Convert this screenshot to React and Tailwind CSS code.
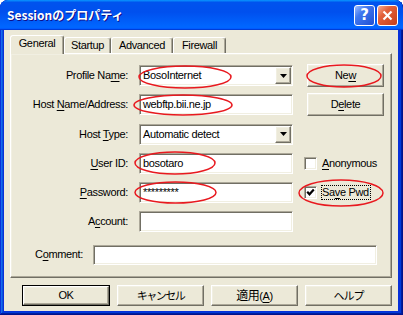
import React from "react";

const RAISED =
  "bg-[#ece9d8] border border-t-white border-l-white border-r-[#716f64] border-b-[#716f64] shadow-[inset_-1px_-1px_0_#aca899,inset_1px_1px_0_#f1efe2]";
const SUNKEN =
  "bg-white border border-t-[#aca899] border-l-[#aca899] border-r-white border-b-white shadow-[inset_1px_1px_0_#716f64,inset_-1px_-1px_0_#f1efe2]";
const JP = "font-['Noto_Sans_CJK_JP',sans-serif]";

function Mn({ children }) {
  return <span className="underline underline-offset-[1.5px]">{children}</span>;
}

function Label({ children }) {
  return (
    <div className="flex items-center justify-end pr-[1px] whitespace-nowrap">
      <span>{children}</span>
    </div>
  );
}

function Combo({ value }) {
  return (
    <div className={`${SUNKEN} flex items-center justify-between`}>
      <span className="pl-[3px] whitespace-nowrap">{value}</span>
      <div className={`${RAISED} m-[1px] w-[16px] h-[17px] flex items-center justify-center`}>
        <svg width="7" height="4" viewBox="0 0 7 4">
          <polygon points="0,0 7,0 3.5,4" fill="#000" />
        </svg>
      </div>
    </div>
  );
}

function Field({ value, className = "" }) {
  return (
    <div className={`${SUNKEN} flex items-center ${className}`}>
      <span className="pl-[3px] whitespace-nowrap">{value}</span>
    </div>
  );
}

function Check({ checked }) {
  return (
    <div className={`${SUNKEN} w-[13px] h-[13px] flex items-center justify-center shrink-0`}>
      {checked && (
        <svg width="9" height="9" viewBox="0 0 9 9">
          <polyline points="1.2,3.8 3.5,6.3 7.8,1.6" fill="none" stroke="#000" strokeWidth="2.2" />
        </svg>
      )}
    </div>
  );
}

function Tab({ active, w, children }) {
  return (
    <div
      className={`${w} ${
        active ? "h-[19px] pb-[3px]" : "h-[16px] mb-[1px]"
      } flex items-center justify-center bg-[#ece9d8] border-t border-l border-r border-t-white border-l-white border-r-[#716f64] shadow-[inset_-1px_0_0_#aca899] rounded-t-[3px]`}
    >
      <span>{children}</span>
    </div>
  );
}

function Btn({ className = "", children }) {
  return (
    <div className={`${RAISED} flex items-center justify-center ${className}`}>
      <span className="whitespace-nowrap">{children}</span>
    </div>
  );
}

export default function App() {
  return (
    <div className="relative w-[403px] h-[315px] bg-white font-['Liberation_Sans',Arial,sans-serif] text-[11px] tracking-[-0.35px] text-black leading-none">
      <div className="w-full h-full rounded-t-[8px] bg-[#0831d9] shadow-[inset_-1px_-1px_#00138c,inset_1px_1px_#0831d9,inset_-2px_-2px_#001ea0,inset_2px_2px_#166aee,inset_-3px_-3px_#003bda,inset_3px_3px_#0855dd] flex flex-col overflow-hidden">
        {/* Title bar */}
        <div className="h-[30px] shrink-0 rounded-t-[8px] bg-[linear-gradient(180deg,#0997ff,#0053ee_8%,#0050ee_40%,#06f_88%,#06f_93%,#005bff_95%,#003dd7_96%,#003dd7)] flex items-center justify-between pl-[7px] pr-[5px]">
          <span className={`${JP} font-bold text-[12px] tracking-[0px] text-white [text-shadow:1px_1px_0_#0f1089]`}>
            Sessionのプロパティ
          </span>
          <div className="flex gap-[2px] mt-[1px]">
            <div className="w-[21px] h-[21px] rounded-[3px] border border-white bg-[linear-gradient(135deg,#9dbcff_0%,#3f77f0_35%,#1f50d2_100%)] flex items-center justify-center">
              <span className="text-white font-bold text-[15px] font-['DejaVu_Sans',sans-serif] tracking-[0px]">?</span>
            </div>
            <div className="w-[21px] h-[21px] rounded-[3px] border border-white bg-[linear-gradient(135deg,#f6ad92_0%,#e3603a_35%,#c63f19_100%)] flex items-center justify-center">
              <svg width="11" height="11" viewBox="0 0 11 11">
                <line x1="1.5" y1="1.5" x2="9.5" y2="9.5" stroke="#fff" strokeWidth="2.2" />
                <line x1="9.5" y1="1.5" x2="1.5" y2="9.5" stroke="#fff" strokeWidth="2.2" />
              </svg>
            </div>
          </div>
        </div>

        {/* Client */}
        <div className="flex-1 pl-[4px] pr-[5px] pb-[4px] flex">
          <div className="flex-1 bg-[#ece9d8] flex flex-col px-[6px] pt-[5px]">
            {/* Tabs */}
            <div className="relative z-10 flex items-end h-[19px]">
              <Tab active w="w-[54px]">General</Tab>
              <Tab w="w-[47px]">Startup</Tab>
              <Tab w="w-[62px]">Advanced</Tab>
              <Tab w="w-[53px]">Firewall</Tab>
            </div>

            {/* Panel */}
            <div className="-mt-[1px] h-[225px] border border-t-white border-l-white border-r-[#716f64] border-b-[#716f64] shadow-[inset_-1px_-1px_0_#aca899,inset_1px_1px_0_#f1efe2] pt-[11px]">
              <div className="grid grid-cols-[118px_154px_81px] auto-rows-[21px] gap-x-[10px] gap-y-[8.3px]">
                <Label>
                  Profile Na<Mn>m</Mn>e:
                </Label>
                <Combo value="BosoInternet" />
                <Btn className="ml-[4px] w-[77px] h-[23px] -mt-[1px]">
                  Ne<Mn>w</Mn>
                </Btn>

                <Label>
                  Host <Mn>N</Mn>ame/Address:
                </Label>
                <Field value="webftp.bii.ne.jp" />
                <Btn className="ml-[4px] w-[77px] h-[23px] -mt-[1px]">
                  D<Mn>e</Mn>lete
                </Btn>

                <Label>
                  Host <Mn>T</Mn>ype:
                </Label>
                <Combo value="Automatic detect" />
                <div />

                <Label>
                  <Mn>U</Mn>ser ID:
                </Label>
                <Field value="bosotaro" />
                <div className="flex items-center pl-[1px]">
                  <Check />
                  <span className="ml-[5px]">
                    <Mn>A</Mn>nonymous
                  </span>
                </div>

                <Label>
                  <Mn>P</Mn>assword:
                </Label>
                <Field value="*********" />
                <div className="flex items-center pl-[1px]">
                  <Check checked />
                  <div className="ml-[4px] h-[15px] pr-[1px] border border-dotted border-black flex items-center">
                    <span className="whitespace-nowrap">
                      Sa<Mn>v</Mn>e Pwd
                    </span>
                  </div>
                </div>

                <Label>
                  A<Mn>c</Mn>count:
                </Label>
                <Field value="" />
                <div />
              </div>

              {/* Comment */}
              <div className="flex items-center mt-[12.5px]">
                <div className="w-[72px] text-right">
                  C<Mn>o</Mn>mment:
                </div>
                <Field value="" className="ml-[10px] w-[284px] h-[20px]" />
              </div>
            </div>

            {/* Bottom buttons */}
            <div className="flex justify-end gap-[7px] mt-[7px]">
              <div className="w-[88px] h-[21px] border border-black flex">
                <Btn className="flex-1">OK</Btn>
              </div>
              <Btn className="w-[87px] h-[21px]">
                <span className={`${JP} text-[11px] tracking-[-1.5px]`}>キャンセル</span>
              </Btn>
              <Btn className="w-[87px] h-[21px]">
                <span className={`${JP} text-[12px] tracking-[-0.5px]`}>適用</span>
                (<Mn>A</Mn>)
              </Btn>
              <Btn className="w-[87px] h-[21px]">
                <span className={`${JP} text-[11px] tracking-[-1px]`}>ヘルプ</span>
              </Btn>
            </div>
          </div>
        </div>
      </div>

      {/* Red annotation ellipses */}
      <svg className="absolute inset-0 pointer-events-none" width="403" height="315" viewBox="0 0 403 315">
        <g fill="none" stroke="#e8191f" strokeWidth="1.5">
          <ellipse cx="185" cy="77" rx="46" ry="11" />
          <ellipse cx="183" cy="105" rx="49" ry="10" />
          <ellipse cx="344" cy="76" rx="37" ry="11" />
          <ellipse cx="175" cy="163" rx="40" ry="11" />
          <ellipse cx="175.5" cy="192.5" rx="40.5" ry="10.5" />
          <ellipse cx="341" cy="193" rx="42" ry="13" />
        </g>
      </svg>
    </div>
  );
}
